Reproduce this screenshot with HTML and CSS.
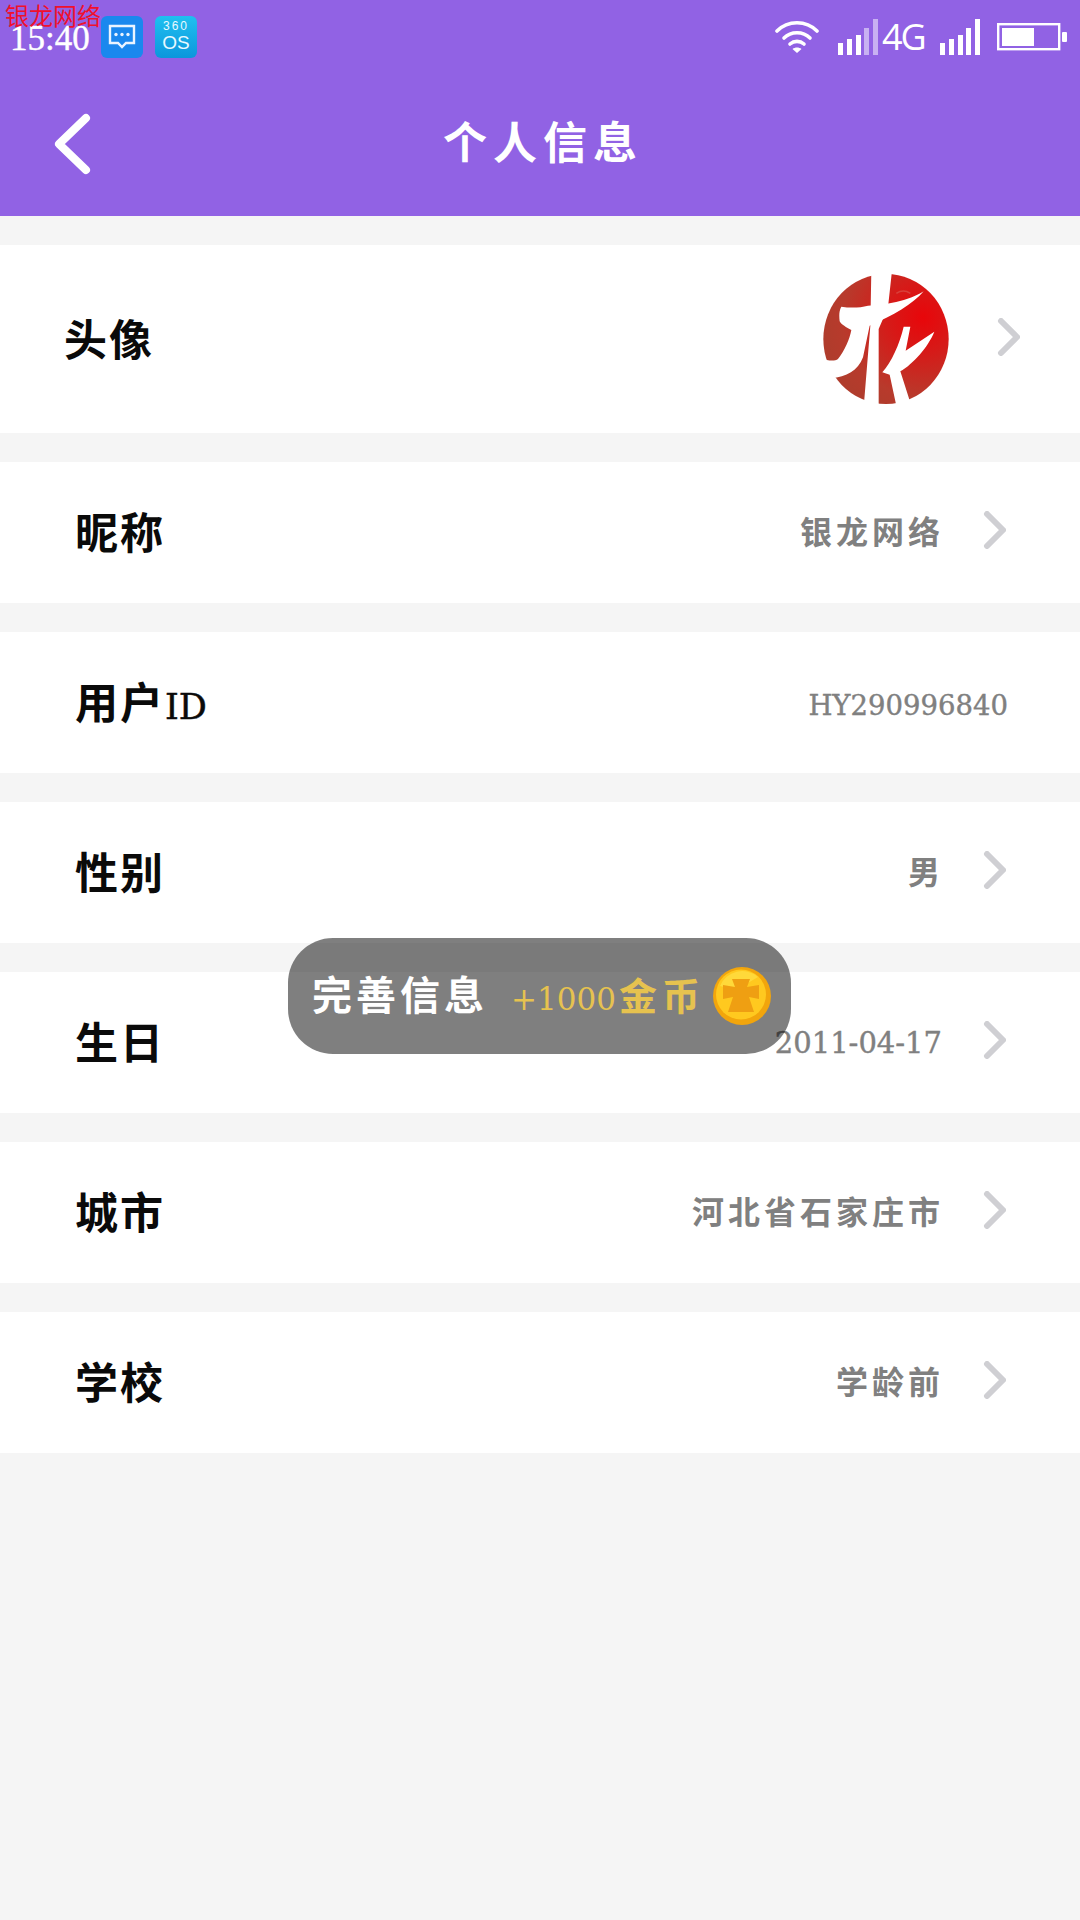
FILE: index.html
```html
<!DOCTYPE html>
<html lang="zh-CN">
<head>
<meta charset="UTF-8">
<meta name="viewport" content="width=device-width, initial-scale=1.0">
<title>个人信息</title>
<link rel="stylesheet" href="styles.css">
</head>
<body>

<div class="page">
    <div class="watermark">银龙网络</div>

    <header class="top">
        <div class="status">
            <div class="status-left">
                <span class="time">15:40</span>
                <div class="tile tile-msg">
                    <svg width="28" height="26" viewBox="0 0 28 26">
                        <path d="M2 2H26V19H18L14 23L10 19H2Z" fill="none" stroke="#eaf4ff" stroke-width="2.4"/>
                        <circle cx="8" cy="10.5" r="1.7" fill="#eaf4ff"/>
                        <circle cx="14" cy="10.5" r="1.7" fill="#eaf4ff"/>
                        <circle cx="20" cy="10.5" r="1.7" fill="#eaf4ff"/>
                    </svg>
                </div>
                <div class="tile tile-os">
                    <span class="os-top">360</span>
                    <span class="os-bottom">OS</span>
                </div>
            </div>
            <div class="status-right">
                <svg class="wifi" width="44" height="36" viewBox="0 0 44 36" fill="none" stroke="#fff" stroke-width="3.6" stroke-linecap="round">
                    <path d="M2 12C13 1 31 1 42 12"/>
                    <path d="M9 19C16 12 28 12 35 19"/>
                    <path d="M15 25C19 21.500 25 21.500 29 25"/>
                    <path d="M22 34L17.500 30C20 28 24 28 26.500 30Z" fill="#fff" stroke="none"/>
                </svg>
                <svg class="signal" width="40" height="36" viewBox="0 0 40 36" fill="#fff">
                    <rect x="0" y="24" width="5" height="12"/>
                    <rect x="9" y="20" width="5" height="16"/>
                    <rect x="18" y="16" width="5" height="20"/>
                    <rect x="26" y="9" width="5" height="27" fill-opacity=".5"/>
                    <rect x="35" y="0" width="5" height="36" fill-opacity=".5"/>
                </svg>
                <span class="net">4G</span>
                <svg class="signal signal-sim2" width="40" height="36" viewBox="0 0 40 36" fill="#fff">
                    <rect x="0" y="24" width="5" height="12"/>
                    <rect x="9" y="20" width="5" height="16"/>
                    <rect x="18" y="16" width="5" height="20"/>
                    <rect x="26" y="9" width="5" height="27"/>
                    <rect x="35" y="0" width="5" height="36"/>
                </svg>
                <svg class="battery" width="70" height="28" viewBox="0 0 70 28">
                    <rect x="1.200" y="1.200" width="61" height="25" fill="none" stroke="#fff" stroke-width="2.4"/>
                    <rect x="5" y="5" width="32" height="18" fill="#fff"/>
                    <rect x="65" y="9" width="5" height="10" rx="1" fill="#fff"/>
                </svg>
            </div>
        </div>
        <div class="toolbar">
            <svg class="back" width="38" height="62" viewBox="0 0 38 62" fill="none" stroke="#fff" stroke-width="8" stroke-linecap="round" stroke-linejoin="round">
                <path d="M32 5L5 31L32 57"/>
            </svg>
            <h1>个人信息</h1>
        </div>
    </header>

    <ul class="list">
        <li class="row row-avatar">
            <span class="label">头像</span>
            <div class="value">
                <svg class="avatar" width="126" height="130" viewBox="130 70 378 390">
                    <defs>
                        <radialGradient id="red" gradientUnits="userSpaceOnUse" cx="430" cy="200" r="300">
                            <stop offset="0" stop-color="#e8060a"/>
                            <stop offset=".35" stop-color="#d61a18"/>
                            <stop offset=".8" stop-color="#b83a2c"/>
                            <stop offset="1" stop-color="#b03c2c"/>
                        </radialGradient>
                        <clipPath id="round"><ellipse cx="319" cy="265" rx="188" ry="195"/></clipPath>
                    </defs>
                    <g clip-path="url(#round)" class="avatar-art">
                        <rect x="130" y="70" width="378" height="390" fill="url(#red)"/>
                        <path d="M275 60H337L325 170L297 235V470H252L272 225Z" fill="#fff"/>
                        <path d="M432 122C400 160 340 195 270 225L250 320C235 360 200 380 155 382L120 320C145 332 165 332 175 325C195 300 210 265 215 238C200 230 185 222 180 212C178 195 178 180 185 168C210 172 240 172 265 165C310 165 390 150 432 122Z" fill="#fff"/>
                        <path d="M372 228H392L378 300L464 243C445 290 400 340 362 362L395 465H350L330 372L308 365C335 335 360 280 372 228Z" fill="#fff"/>
                        <path d="M350 128C365 118 380 120 392 128" fill="none" stroke="#d8403a" stroke-width="5"/>
                    </g>
                </svg>
                <svg class="chevron" width="24" height="38" viewBox="0 0 24 38" fill="none" stroke="#cfcfd3" stroke-width="6" stroke-linecap="round" stroke-linejoin="round"><path d="M5 3L21 19L5 35"/></svg>
            </div>
        </li>
        <li class="row">
            <span class="label">昵称</span>
            <div class="value">
                <span class="text">银龙网络</span>
                <svg class="chevron" width="24" height="38" viewBox="0 0 24 38" fill="none" stroke="#cfcfd3" stroke-width="6" stroke-linecap="round" stroke-linejoin="round"><path d="M5 3L21 19L5 35"/></svg>
            </div>
        </li>
        <li class="row">
            <span class="label">用户<span class="latin">ID</span></span>
            <div class="value">
                <span class="text text-id">HY290996840</span>
            </div>
        </li>
        <li class="row">
            <span class="label">性别</span>
            <div class="value">
                <span class="text">男</span>
                <svg class="chevron" width="24" height="38" viewBox="0 0 24 38" fill="none" stroke="#cfcfd3" stroke-width="6" stroke-linecap="round" stroke-linejoin="round"><path d="M5 3L21 19L5 35"/></svg>
            </div>
        </li>
        <li class="row">
            <span class="label">生日</span>
            <div class="value">
                <span class="text text-date">2011-04-17</span>
                <svg class="chevron" width="24" height="38" viewBox="0 0 24 38" fill="none" stroke="#cfcfd3" stroke-width="6" stroke-linecap="round" stroke-linejoin="round"><path d="M5 3L21 19L5 35"/></svg>
            </div>
        </li>
        <li class="row">
            <span class="label">城市</span>
            <div class="value">
                <span class="text">河北省石家庄市</span>
                <svg class="chevron" width="24" height="38" viewBox="0 0 24 38" fill="none" stroke="#cfcfd3" stroke-width="6" stroke-linecap="round" stroke-linejoin="round"><path d="M5 3L21 19L5 35"/></svg>
            </div>
        </li>
        <li class="row">
            <span class="label">学校</span>
            <div class="value">
                <span class="text">学龄前</span>
                <svg class="chevron" width="24" height="38" viewBox="0 0 24 38" fill="none" stroke="#cfcfd3" stroke-width="6" stroke-linecap="round" stroke-linejoin="round"><path d="M5 3L21 19L5 35"/></svg>
            </div>
        </li>
    </ul>

    <div class="toast">
        <span class="toast-text">完善信息</span>
        <span class="toast-gold"><span class="toast-num">+1000</span>金币</span>
        <svg class="coin" width="60" height="60" viewBox="0 0 60 60">
            <circle cx="30" cy="30" r="29" fill="#f2a50c"/>
            <circle cx="29" cy="28.500" r="25" fill="#ffc91f"/>
            <path d="M8 20A24 24 0 0 1 46 11L24 24Z" fill="#ffd93a"/>
            <path d="M20 13H38L35 21L47 19V33L37 31L42 46H16L21 31L11 33V19L23 21Z" fill="#ef9f12"/>
        </svg>
    </div>
</div>

</body>
</html>
```

FILE: styles.css
```css
* {
    box-sizing: border-box;
}

body {
    margin: 0;
    padding: 0;
    background-color: #f5f5f5;
    font-family: "DejaVu Serif", "Noto Sans CJK SC", serif;
}

.page {
    position: relative;
    width: 1080px;
    height: 1920px;
    overflow: hidden;
}

.watermark {
    position: absolute;
    top: 0;
    left: 5px;
    font-family: "Noto Sans CJK SC", sans-serif;
    font-size: 24px;
    line-height: 30px;
    color: #f0102c;
}

/* purple header */
.top {
    height: 216px;
    background-color: #9162e4;
    color: #fff;
}

.status {
    display: flex;
    justify-content: space-between;
    align-items: center;
    height: 72px;
    padding: 2px 13px 0 10px;
}

.status-left,
.status-right {
    display: flex;
    align-items: center;
}

.time {
    width: 80px;
    margin-top: 4px;
    font-family: "Liberation Serif", serif;
    font-size: 35px;
    line-height: 40px;
    white-space: nowrap;
    -webkit-text-stroke: 0.4px #fff;
}

.tile {
    display: flex;
    flex-direction: column;
    align-items: center;
    justify-content: center;
    width: 42px;
    height: 42px;
    border-radius: 6px;
}

.tile-msg {
    margin-left: 11px;
    background-color: #1a88ee;
}

.tile-os {
    margin-left: 12px;
    background: linear-gradient(#1fc0f0, #0c96dc);
    color: #e8f9ff;
    font-family: "Liberation Sans", sans-serif;
}

.os-top {
    font-size: 12px;
    line-height: 11px;
    letter-spacing: 2px;
}

.os-bottom {
    font-size: 19px;
    line-height: 21px;
}

.wifi {
    display: block;
}

.signal {
    margin-left: 19px;
}

.net {
    width: 48px;
    margin-left: 4px;
    font-family: "Open Sans", sans-serif;
    font-size: 36px;
    line-height: 40px;
    letter-spacing: -2px;
}

.signal-sim2 {
    margin-left: 10px;
}

.battery {
    margin-left: 17px;
}

.toolbar {
    position: relative;
    display: flex;
    align-items: center;
    justify-content: center;
    height: 142px;
    padding-bottom: 6px;
}

.back {
    position: absolute;
    left: 54px;
    top: 41px;
}

.toolbar h1 {
    margin: 0;
    padding-left: 6px;
    font-family: "Noto Sans CJK SC", sans-serif;
    font-size: 44px;
    font-weight: 700;
    letter-spacing: 6px;
}

/* rows */
.list {
    margin: 0;
    padding: 29px 0 0;
    list-style: none;
}

.row {
    display: flex;
    align-items: center;
    justify-content: space-between;
    height: 141px;
    margin-bottom: 29px;
    padding: 0 74px 5px 75px;
    background-color: #fff;
}

.row-avatar {
    height: 188px;
    padding: 0 60px 5px 64px;
}

.label {
    font-family: "Noto Sans CJK SC", sans-serif;
    font-size: 43px;
    font-weight: 700;
    letter-spacing: 2px;
    color: #0a0a0a;
}

.latin {
    font-family: "DejaVu Serif", serif;
    font-size: 35px;
    font-weight: 400;
    letter-spacing: 0;
    -webkit-text-stroke: 0.5px #0a0a0a;
}

.value {
    display: flex;
    align-items: center;
}

.text {
    font-family: "Noto Sans CJK SC", sans-serif;
    font-size: 32px;
    font-weight: 700;
    letter-spacing: 4px;
    color: #808080;
}

.text-id,
.text-date {
    font-family: "DejaVu Serif", serif;
    font-weight: 400;
    letter-spacing: 0;
    -webkit-text-stroke: 0.4px #808080;
}

.text-id {
    margin-top: 9px;
    margin-right: -2px;
    font-size: 27.5px;
    white-space: nowrap;
}

.text-date {
    margin-top: 6px;
    margin-right: 2px;
    font-size: 29px;
}

.chevron {
    display: block;
    margin-left: 38px;
}

.avatar {
    display: block;
    margin-top: 5px;
}

.avatar-art {
    filter: blur(1.5px);
}

.row-avatar .chevron {
    margin-left: 47px;
}

/* toast over the list */
.toast {
    position: absolute;
    top: 938px;
    left: 288px;
    display: flex;
    align-items: center;
    width: 503px;
    height: 116px;
    padding: 0 20px 6px 24px;
    border-radius: 45px;
    background-color: rgba(0, 0, 0, 0.5);
}

.toast-text {
    font-family: "Noto Sans CJK SC", sans-serif;
    font-size: 40px;
    font-weight: 700;
    letter-spacing: 4px;
    color: #fff;
}

.toast-gold {
    margin-left: 23px;
    font-family: "Noto Sans CJK SC", sans-serif;
    font-size: 38px;
    font-weight: 700;
    letter-spacing: 5px;
    color: #e6c24f;
}

.toast-num {
    margin-right: 3px;
    font-family: "DejaVu Serif", serif;
    font-size: 31px;
    font-weight: 400;
    letter-spacing: 0;
}

.coin {
    position: absolute;
    right: 19px;
    top: 28px;
}
```
